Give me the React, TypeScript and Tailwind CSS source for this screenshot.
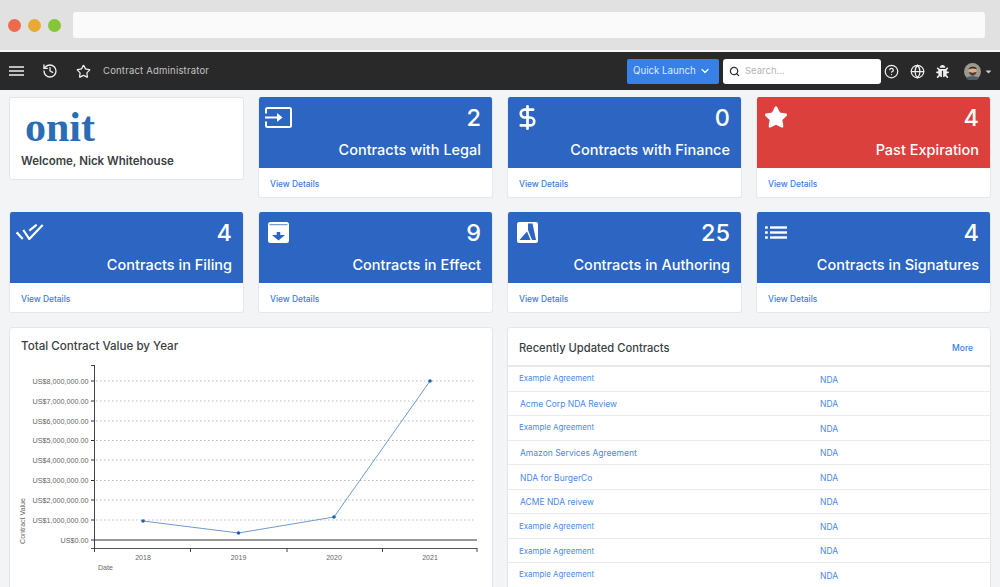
import React from "react";
import { History, Star, ChevronDown, Search, CircleHelp, Globe, DollarSign } from "lucide-react";
import { FaBug, FaStar, FaCaretDown } from "react-icons/fa";

const InputIcon = () => (
  <svg width="27" height="21" viewBox="0 0 27 21" fill="none" stroke="white" strokeWidth="2">
    <path d="M1 6.500V2.500A1.500 1.500 0 0 1 2.500 1h22A1.500 1.500 0 0 1 26 2.500v16a1.500 1.500 0 0 1-1.500 1.500h-22A1.500 1.500 0 0 1 1 18.500V14.500" />
    <path d="M0 10.500h14" />
    <path d="M12 6l5.500 4.500-5.500 4.500z" fill="white" stroke="none" />
  </svg>
);
const DoubleCheck = () => (
  <svg width="28" height="16" viewBox="0 0 28 16" fill="none" stroke="white" strokeWidth="2.200">
    <path d="M0.700 8.300l6 6.700" />
    <path d="M7.300 6l6 9L26.700 1" />
    <path d="M13.300 6.700L20.700 0.700" />
  </svg>
);
const ArchiveIcon = () => (
  <svg width="21" height="21" viewBox="0 0 21 21" className="ml-[3px]">
    <path d="M2.500 0h16A2.500 2.500 0 0 1 21 2.500v16a2.500 2.500 0 0 1-2.500 2.500h-16A2.500 2.500 0 0 1 0 18.500v-16A2.500 2.500 0 0 1 2.500 0z" fill="white" />
    <path d="M1.500 2.700h18" stroke="#2c66c2" strokeWidth="0.800" />
    <path d="M8.700 10h3.600v3h4.700l-6.500 5.500L4 13h4.700z" fill="#2c66c2" />
  </svg>
);
const AuthorIcon = () => (
  <svg width="21" height="21" viewBox="0 0 21 21" className="ml-[3px]">
    <rect width="21" height="21" rx="2" fill="white" />
    <path d="M11 1.500h4.500L19 18h-4L11 8z" fill="#2c66c2" />
    <path d="M2.500 18L10 9.500 13.500 18z" fill="#2c66c2" />
  </svg>
);
const ListIcon = () => (
  <svg width="22" height="13" viewBox="0 0 22 13" fill="white" className="ml-[2px]">
    <rect x="0" y="0.300" width="2.800" height="2.400" rx="0.500" />
    <rect x="0" y="5.300" width="2.800" height="2.400" rx="0.500" />
    <rect x="0" y="10.300" width="2.800" height="2.400" rx="0.500" />
    <rect x="5" y="0.300" width="17" height="2.400" />
    <rect x="5" y="5.300" width="17" height="2.400" />
    <rect x="5" y="10.300" width="17" height="2.400" />
  </svg>
);
const Avatar = () => (
  <svg width="17" height="17" viewBox="0 0 17 17">
    <circle cx="8.500" cy="8.500" r="8.500" fill="#9a9a90" />
    <circle cx="8.700" cy="7.500" r="4.200" fill="#d9ae92" />
    <path d="M4.500 6.500C5 2.500 12.500 2.500 13 6.500 10.500 5 7 5 4.500 6.500z" fill="#3e3028" />
    <path d="M4.800 8.500c.6 5.500 7.200 5.500 7.800 0-1 1.500-6.800 1.500-7.800 0z" fill="#54392a" />
    <path d="M2 15c2-2.500 11-2.500 13 0a8.500 8.500 0 0 1-13 0z" fill="#4d5c68" />
  </svg>
);

const cards = [
  { icon: <InputIcon />, n: "2", label: "Contracts with Legal", bg: "bg-[#2c66c2]" },
  { icon: <DollarSign size={27} strokeWidth={2.400} color="white" />, n: "0", label: "Contracts with Finance", bg: "bg-[#2c66c2]" },
  { icon: <FaStar size={24} color="white" className="ml-[1px]" />, n: "4", label: "Past Expiration", bg: "bg-[#dc403d]" },
];
const cards2 = [
  { icon: <DoubleCheck />, n: "4", label: "Contracts in Filing", bg: "bg-[#2c66c2]" },
  { icon: <ArchiveIcon />, n: "9", label: "Contracts in Effect", bg: "bg-[#2c66c2]" },
  { icon: <AuthorIcon />, n: "25", label: "Contracts in Authoring", bg: "bg-[#2c66c2]" },
  { icon: <ListIcon />, n: "4", label: "Contracts in Signatures", bg: "bg-[#2c66c2]" },
];

function StatCard({ icon, n, label, bg }: { icon: React.ReactNode; n: string; label: string; bg: string }) {
  return (
    <div className="h-[101px] rounded-[3px] bg-white border border-[#e4e7eb] border-t-0 overflow-hidden flex flex-col">
      <div className={`${bg} h-[71px] shrink-0 flex justify-between pl-[6px] pr-[11px] pt-[7px]`}>
        <div className="h-[26px] flex items-center">{icon}</div>
        <div className="flex flex-col items-end pt-[1px]">
          <div className="text-[23.5px] leading-[26px] font-medium text-white">{n}</div>
          <div className="text-[14.500px] leading-[20px] mt-[9px] text-white font-medium">{label}</div>
        </div>
      </div>
      <div className="flex-1 pl-[11px] pt-[3px] flex items-center">
        <span className="text-[8.400px] font-medium text-[#3a80e0]">View Details</span>
      </div>
    </div>
  );
}

const rows = [
  { t: "Example Agreement", a: "pb-[2px] pl-[11px] text-[7.900px]", c: "pt-[1px]" },
  { t: "Acme Corp NDA Review", a: "pl-[12px]", c: "" },
  { t: "Example Agreement", a: "pb-[2px] pl-[11px] text-[7.900px]", c: "pt-[1px]" },
  { t: "Amazon Services Agreement", a: "pl-[12px]", c: "" },
  { t: "NDA for BurgerCo", a: "pl-[12px]", c: "" },
  { t: "ACME NDA reivew", a: "pl-[12px]", c: "" },
  { t: "Example Agreement", a: "pl-[11px] text-[7.900px]", c: "" },
  { t: "Example Agreement", a: "pl-[11px] text-[7.900px]", c: "" },
  { t: "Example Agreement", a: "pb-[2px] pl-[11px] text-[7.900px]", c: "pt-[1px]" },
];

const yTicks = [381, 401, 421, 440.5, 460, 480.5, 500, 520];
const yLabels = ["US$8,000,000.00", "US$7,000,000.00", "US$6,000,000.00", "US$5,000,000.00", "US$4,000,000.00", "US$3,000,000.00", "US$2,000,000.00", "US$1,000,000.00"];

function Chart() {
  const pts = [[143, 521], [238.5, 533], [334, 517], [430, 381]];
  return (
    <svg width="482" height="232" viewBox="10 355 482 232" className="block" style={{ fontFamily: "'Liberation Sans', sans-serif" }}>
      {yTicks.map((y, i) => (
        <g key={y}>
          <line x1="91" x2="95" y1={y} y2={y} stroke="#333" strokeWidth="1" />
          <line x1="96" x2="476" y1={y} y2={y} stroke="#bbb" strokeWidth="1" strokeDasharray="1.5 2.5" />
          <text x="88.5" y={y + 2.6} textAnchor="end" fontSize="7.2" fill="#666">{yLabels[i]}</text>
        </g>
      ))}
      <text x="88.5" y="542.6" textAnchor="end" fontSize="7.2" fill="#666">US$0.00</text>
      <line x1="94.5" x2="94.5" y1="365" y2="549" stroke="#444" strokeWidth="1" />
      <line x1="91" x2="94" y1="365.5" y2="365.5" stroke="#444" />
      <line x1="91" x2="477" y1="540" y2="540" stroke="#333" strokeWidth="1" />
      <line x1="91" x2="477" y1="548.5" y2="548.5" stroke="#555" strokeWidth="1" />
      {[94.5, 190.5, 287, 382.5, 477].map((x) => (
        <line key={x} x1={x} x2={x} y1="548" y2="552" stroke="#444" />
      ))}
      {["2018", "2019", "2020", "2021"].map((t, i) => (
        <text key={t} x={[143, 238.5, 334, 430][i]} y="559.500" textAnchor="middle" fontSize="7" fill="#666">{t}</text>
      ))}
      <text x="98" y="569.500" fontSize="7" fill="#666">Date</text>
      <text transform="translate(25 521) rotate(-90)" textAnchor="middle" fontSize="7" fill="#666">Contract Value</text>
      <polyline points={pts.map((p) => p.join(",")).join(" ")} fill="none" stroke="#6d9bcf" strokeWidth="1" />
      {pts.map((p) => (
        <circle key={p[0]} cx={p[0]} cy={p[1]} r="1.800" fill="#1f5fa8" />
      ))}
    </svg>
  );
}

export default function App() {
  return (
    <div className="w-[1000px] h-[587px] overflow-hidden bg-[#f3f4f6] font-['Inter',sans-serif] flex flex-col">
      <div className="h-[52px] shrink-0 bg-[#e1e1e1] border-b-2 border-[#f7f7f7] flex pl-[8px] pt-[19px] gap-[7px] items-start">
        <span className="w-[13px] h-[13px] rounded-full bg-[#ee6a4d]" />
        <span className="w-[13px] h-[13px] rounded-full bg-[#e9a935]" />
        <span className="w-[13px] h-[13px] rounded-full bg-[#83c63a]" />
        <div className="ml-[5px] -mt-[7px] w-[912px] h-[26px] rounded-[3px] bg-[#fafafa]" />
      </div>
      <div className="h-[38px] shrink-0 bg-[#292929] flex items-center text-white">
        <svg width="15" height="10" viewBox="0 0 15 10" className="ml-[9px]" stroke="#eee" strokeWidth="1.300">
          <path d="M0 1h15M0 5h15M0 9h15" />
        </svg>
        <History size={16} strokeWidth={2} className="ml-[18px]" color="#eee" />
        <Star size={15} strokeWidth={2} className="ml-[18px]" color="#eee" />
        <span className="ml-[12px] text-[9.500px] text-[#c4c4c4] tracking-[0.2px]">Contract Administrator</span>
        <div className="ml-auto w-[92px] h-[25px] rounded-[2px] bg-[#3680e8] flex items-center pl-[6px] gap-[3px] text-[#dfe9fa] text-[9.700px]">
          Quick Launch <ChevronDown size={12} strokeWidth={2.400} color="white" />
        </div>
        <div className="ml-[4px] w-[158px] h-[25px] rounded-[3px] bg-white flex items-center pl-[6px] gap-[5px] text-[9.500px] text-[#b5b5b5]">
          <Search size={11} strokeWidth={2.800} color="#333" /> Search...
        </div>
        <CircleHelp size={15} strokeWidth={2} color="#eee" className="ml-[3px]" />
        <Globe size={15} strokeWidth={2} color="#eee" className="ml-[11px]" />
        <FaBug size={13} color="#eee" className="ml-[11px]" />
        <div className="ml-[15px]"><Avatar /></div>
        <FaCaretDown size={9} color="#ccc" className="ml-[3px] mr-[7px]" />
      </div>
      <div className="px-[9px] pt-[7px] flex flex-col gap-[14px]">
        <div className="grid grid-cols-4 gap-[14px] items-start">
          <div className="h-[83px] rounded-[3px] bg-white border border-[#e2e5e9] flex flex-col pl-[11px]">
            <div className="font-['Liberation_Serif',serif] text-[42px] leading-[31px] mt-[14px] ml-[4px] font-bold text-[#2a6db5]">onit</div>
            <div className="text-[11.500px] leading-[14px] mt-[11px] font-semibold text-[#3a3f45]">Welcome, Nick Whitehouse</div>
          </div>
          {cards.map((c) => <StatCard key={c.label} {...c} />)}
        </div>
        <div className="grid grid-cols-4 gap-[14px]">
          {cards2.map((c) => <StatCard key={c.label} {...c} />)}
        </div>
        <div className="grid grid-cols-2 gap-[14px]">
          <div className="h-[261px] rounded-t-[3px] bg-white border border-[#e2e5e9] flex flex-col">
            <div className="pl-[11px] pt-[11px] h-[27px] text-[11.600px] font-medium leading-[15px] text-[#3a3f45]">Total Contract Value by Year</div>
            <Chart />
          </div>
          <div className="h-[261px] rounded-t-[3px] bg-white border border-[#e2e5e9] flex flex-col overflow-hidden">
            <div className="h-[39px] shrink-0 flex items-center justify-between pl-[11px] pr-[17px] pt-[3px] border-b-2 border-[#e6e8eb]">
              <span className="text-[11.200px] font-medium text-[#3a3f45]">Recently Updated Contracts</span>
              <span className="text-[8.500px] font-medium text-[#3a80e0]">More</span>
            </div>
            {rows.map((r, i) => (
              <div key={i} className="h-[24.5px] shrink-0 flex items-center pt-[3px] border-b border-[#e9ebee] text-[8.500px] text-[#4a8ae6] relative">
                <span className={r.a}>{r.t}</span>
                <span className={`absolute left-[312px] ${r.c}`}>NDA</span>
              </div>
            ))}
          </div>
        </div>
      </div>
    </div>
  );
}
